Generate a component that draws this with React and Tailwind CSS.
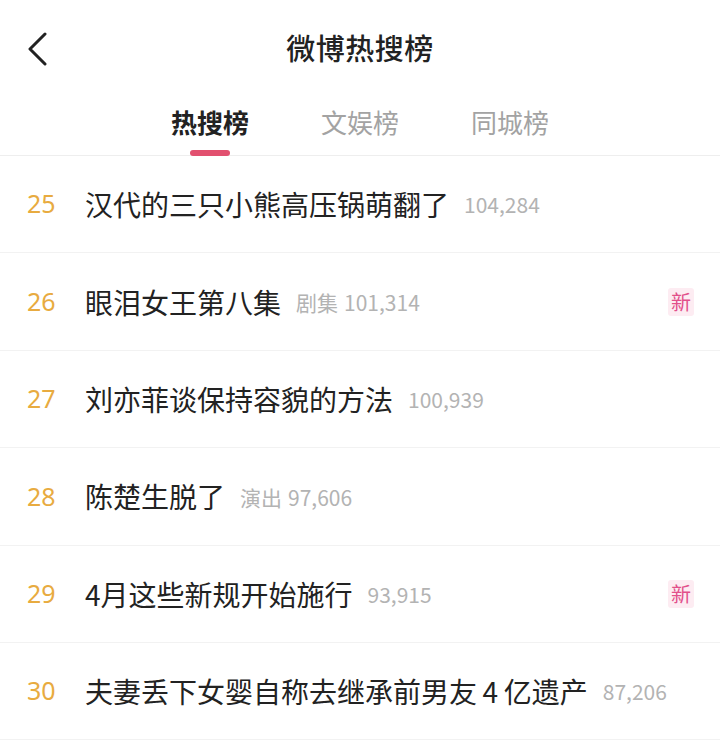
const rows = [
  { rank: 25, title: "汉代的三只小熊高压锅萌翻了", tag: "", count: "104,284" },
  { rank: 26, title: "眼泪女王第八集", tag: "剧集", count: "101,314", isNew: true },
  { rank: 27, title: "刘亦菲谈保持容貌的方法", tag: "", count: "100,939" },
  { rank: 28, title: "陈楚生脱了", tag: "演出", count: "97,606" },
  { rank: 29, title: "4月这些新规开始施行", tag: "", count: "93,915", isNew: true },
  { rank: 30, title: "夫妻丢下女婴自称去继承前男友\u20094\u2009亿遗产", tag: "", count: "87,206" },
];

export default function App() {
  return (
    <div
      className="w-[720px] h-[750px] bg-white overflow-hidden text-[#222]"
      style={{ fontFamily: '"Noto Sans CJK SC", "Noto Sans", sans-serif' }}
    >
      {/* top bar */}
      <div className="relative h-[96px] flex items-center justify-center">
        <svg className="absolute left-[25px] top-[32px]" width="26" height="34" viewBox="0 0 26 34" fill="none">
          <polyline points="20,2 5,17 20,32" stroke="#222" strokeWidth="3" strokeLinecap="round" strokeLinejoin="round" />
        </svg>
        <h1 className="text-[29px] font-medium tracking-[0.5px]">微博热搜榜</h1>
      </div>

      {/* tabs */}
      <div className="h-[60px] flex justify-center border-b border-[#eeeeee]">
        {["热搜榜", "文娱榜", "同城榜"].map((t, i) => (
          <div key={t} className="w-[150px] relative flex justify-center pt-[6px]">
            <span className={i === 0 ? "text-[26px] font-bold text-[#222]" : "text-[26px] text-[#a3a3a3]"}>{t}</span>
            {i === 0 && (
              <div className="absolute bottom-[-1px] left-1/2 -translate-x-1/2 w-[40px] h-[6px] rounded-full bg-[#e2506f]" />
            )}
          </div>
        ))}
      </div>

      {/* list */}
      {rows.map((r) => (
        <div key={r.rank} className="h-[97.4px] flex items-center border-b border-[#f2f2f2] pl-[27px] pr-[26px]">
          <span className="w-[58px] shrink-0 text-[25px] text-[#e8ab40]" style={{ fontFamily: '"Noto Sans", sans-serif' }}>
            {r.rank}
          </span>
          <div className="flex items-center min-w-0 flex-1 max-w-[582px]">
            <span className="text-[28px] whitespace-nowrap shrink-0 text-[#222]">{r.title}</span>
            <span className="ml-[15px] text-[21px] text-[#b3b3b3] whitespace-nowrap truncate min-w-0 pt-[2px]">
              {r.tag && <span className="mr-[6px]">{r.tag}</span>}
              {r.count}
            </span>
          </div>
          {r.isNew && (
            <span className="ml-auto w-[26px] h-[28px] flex items-center justify-center bg-[#fdecf2] text-[#e2508a] text-[20px] rounded-[3px]">
              新
            </span>
          )}
        </div>
      ))}
    </div>
  );
}
